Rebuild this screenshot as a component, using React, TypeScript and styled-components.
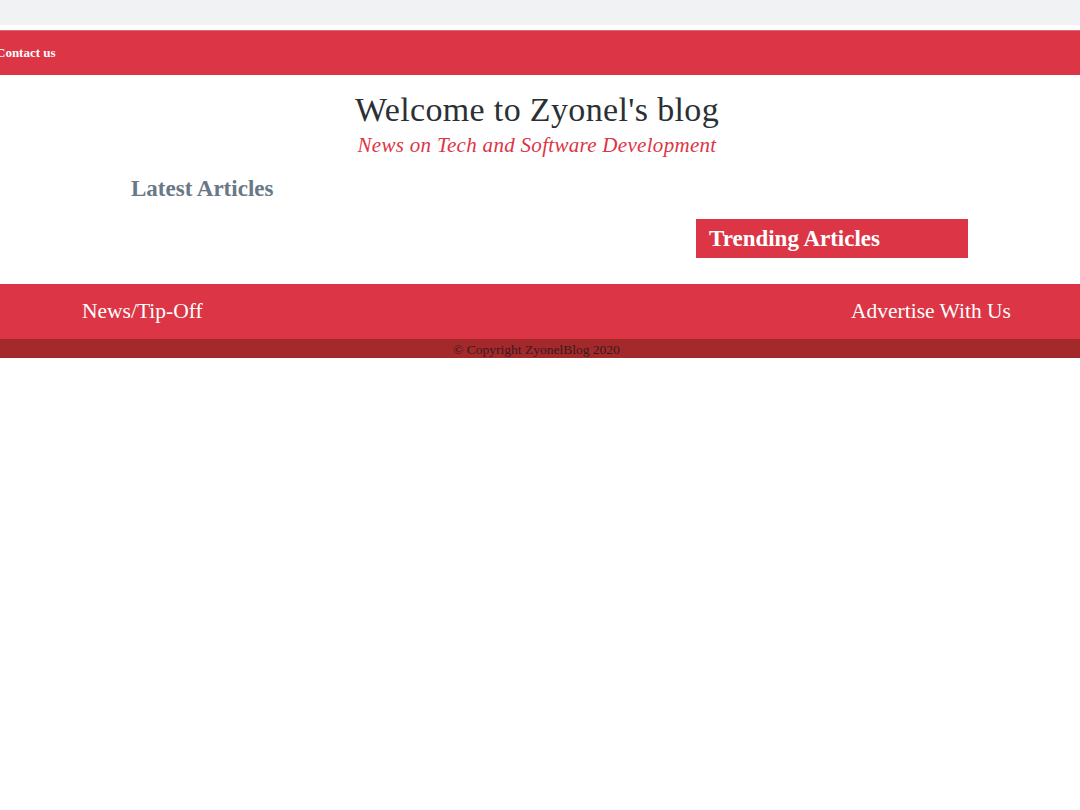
import React from "react";
import styled, { createGlobalStyle } from "styled-components";

const Global = createGlobalStyle`
  html, body { margin: 0; padding: 0; background: #ffffff; }
  body { font-family: "Liberation Serif", "Times New Roman", serif; }
  * { box-sizing: border-box; }
`;

const TopStrip = styled.div`
  height: 25px;
  background: #f1f2f4;
`;

const Nav = styled.nav`
  margin-top: 5px;
  height: 45px;
  background: #dc3545;
  border-top: 1px solid #e06a74;
  display: flex;
  align-items: center;
  overflow: hidden;
`;

const NavLink = styled.a`
  margin-left: -4px;
  color: #ffffff;
  font-size: 13px;
  font-weight: bold;
  text-decoration: none;
`;

const Header = styled.header`
  display: flex;
  flex-direction: column;
  align-items: center;
  padding: 15px 6px 0 0;
`;

const Title = styled.h1`
  margin: 0;
  font-size: 34px;
  font-weight: normal;
  color: #2b3035;
  line-height: 40px;
  letter-spacing: 0.35px;
`;

const Subtitle = styled.p`
  margin: 3px 0 0;
  font-size: 21px;
  font-style: italic;
  color: #dc3545;
  line-height: 24px;
  letter-spacing: 0.3px;
`;

const Main = styled.main`
  display: flex;
  justify-content: space-between;
  padding: 17px 112px 26px 131px;
`;

const SectionTitle = styled.h2`
  margin: 0;
  font-size: 23px;
  font-weight: bold;
  color: #687886;
  line-height: 30px;
`;

const Aside = styled.aside`
  padding-top: 45px;
`;

const TrendingBox = styled.div`
  width: 272px;
  height: 39px;
  background: #dc3545;
  color: #ffffff;
  font-size: 23px;
  font-weight: bold;
  padding-left: 13px;
  display: flex;
  align-items: center;
`;

const Footer = styled.footer`
  height: 55px;
  background: #dc3545;
  display: flex;
  align-items: center;
  justify-content: space-between;
  padding: 0 69px 0 82px;
`;

const FooterLink = styled.a`
  color: #ffffff;
  font-size: 21.5px;
  text-decoration: none;
`;

const Copyright = styled.div`
  height: 19px;
  background: #a3292b;
  color: #3a1a1c;
  font-size: 13.5px;
  text-align: center;
  line-height: 21px;
  padding-right: 7px;
`;

export default function App() {
  return (
    <>
      <Global />
      <TopStrip />
      <Nav>
        <NavLink href="#">Contact us</NavLink>
      </Nav>
      <Header>
        <Title>Welcome to Zyonel's blog</Title>
        <Subtitle>News on Tech and Software Development</Subtitle>
      </Header>
      <Main>
        <SectionTitle>Latest Articles</SectionTitle>
        <Aside>
          <TrendingBox>Trending Articles</TrendingBox>
        </Aside>
      </Main>
      <Footer>
        <FooterLink href="#">News/Tip-Off</FooterLink>
        <FooterLink href="#">Advertise With Us</FooterLink>
      </Footer>
      <Copyright>© Copyright ZyonelBlog 2020</Copyright>
    </>
  );
}
